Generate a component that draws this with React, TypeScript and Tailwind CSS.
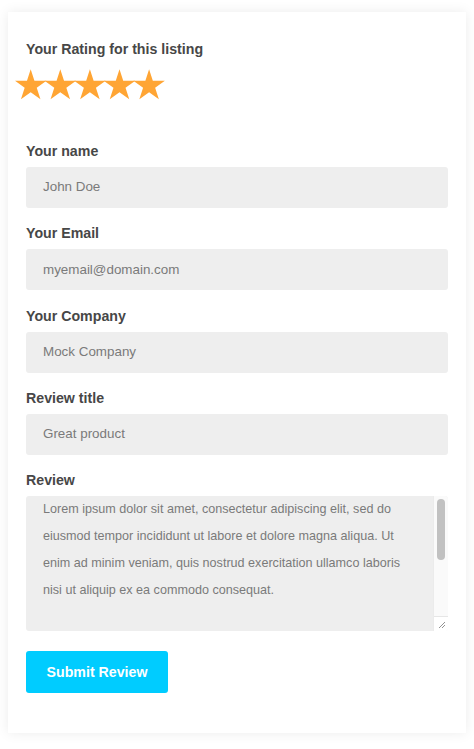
import React from "react";

const fields = [
  { label: "Your name", value: "John Doe" },
  { label: "Your Email", value: "myemail@domain.com" },
  { label: "Your Company", value: "Mock Company" },
  { label: "Review title", value: "Great product" },
];

const starPoints = (cx: number, cy: number, R: number) => {
  const r = R * 0.382;
  const pts: string[] = [];
  for (let i = 0; i < 10; i++) {
    const rad = i % 2 === 0 ? R : r;
    const a = (Math.PI / 5) * i - Math.PI / 2;
    pts.push(`${(cx + rad * Math.cos(a)).toFixed(2)},${(cy + rad * Math.sin(a)).toFixed(2)}`);
  }
  return pts.join(" ");
};

const Stars = () => (
  <svg width="150" height="32" viewBox="0 0 150 32" className="-ml-[11px]">
    {[0, 1, 2, 3, 4].map((i) => (
      <polygon key={i} points={starPoints(15.7 + i * 29.6, 16.8, 16.6)} fill="#ffa534" />
    ))}
  </svg>
);

const App = () => {
  return (
    <div
      className="min-h-screen bg-white px-[8px] pt-[12px] pb-[15px]"
      style={{ fontFamily: '"Liberation Sans", Arial, sans-serif' }}
    >
      <div className="bg-white px-[18px] pt-[27px] pb-[40px] shadow-[0_0_12px_rgba(0,0,0,0.08)]">
        <div className="text-[14.2px] leading-[20px] font-bold text-[#474747]">Your Rating for this listing</div>
        <div className="mt-[10px]">
          <Stars />
        </div>

        <div className="mt-[40px] flex flex-col">
          {fields.map((f) => (
            <div key={f.label} className="mb-[15.3px]">
              <div className="text-[14.2px] leading-[20px] font-bold text-[#474747]">{f.label}</div>
              <div className="mt-[6px] h-[41px] rounded-[3px] bg-[#eeeeee] pl-[17px] flex items-center text-[13.4px] text-[#7a7a7a]">
                {f.value}
              </div>
            </div>
          ))}
          <div>
            <div className="text-[14.2px] leading-[20px] font-bold text-[#474747]">Review</div>
            <div className="mt-[6px] h-[135px] rounded-[3px] bg-[#eeeeee] flex overflow-hidden">
              <div className="flex-1 pl-[17px] pr-[24px] text-[12.6px] leading-[27px] text-[#7a7a7a]">
                Lorem ipsum dolor sit amet, consectetur adipiscing elit, sed do eiusmod tempor incididunt ut labore et
                dolore magna aliqua. Ut enim ad minim veniam, quis nostrud exercitation ullamco laboris nisi ut aliquip
                ex ea commodo consequat.
              </div>
              <div className="w-[15px] flex flex-col bg-[#fafafa] border-l border-[#ebebeb]">
                <div className="flex-1 pt-[3px] pl-[3px]">
                  <div className="w-[8px] h-[61px] rounded-full bg-[#c1c1c1]" />
                </div>
                <div className="h-[15px] bg-white border-t border-[#e6e6e6] flex items-end justify-end p-[2px]">
                  <svg width="8" height="8" viewBox="0 0 8 8">
                    <path d="M1 7 L7 1 M4 7 L7 4" stroke="#777" strokeWidth="0.8" />
                  </svg>
                </div>
              </div>
            </div>
          </div>
        </div>

        <button className="mt-[20px] h-[42px] w-[142px] rounded-[3px] bg-[#00ccff] text-white text-[14.2px] font-bold">
          Submit Review
        </button>
      </div>
    </div>
  );
};

export default App;
